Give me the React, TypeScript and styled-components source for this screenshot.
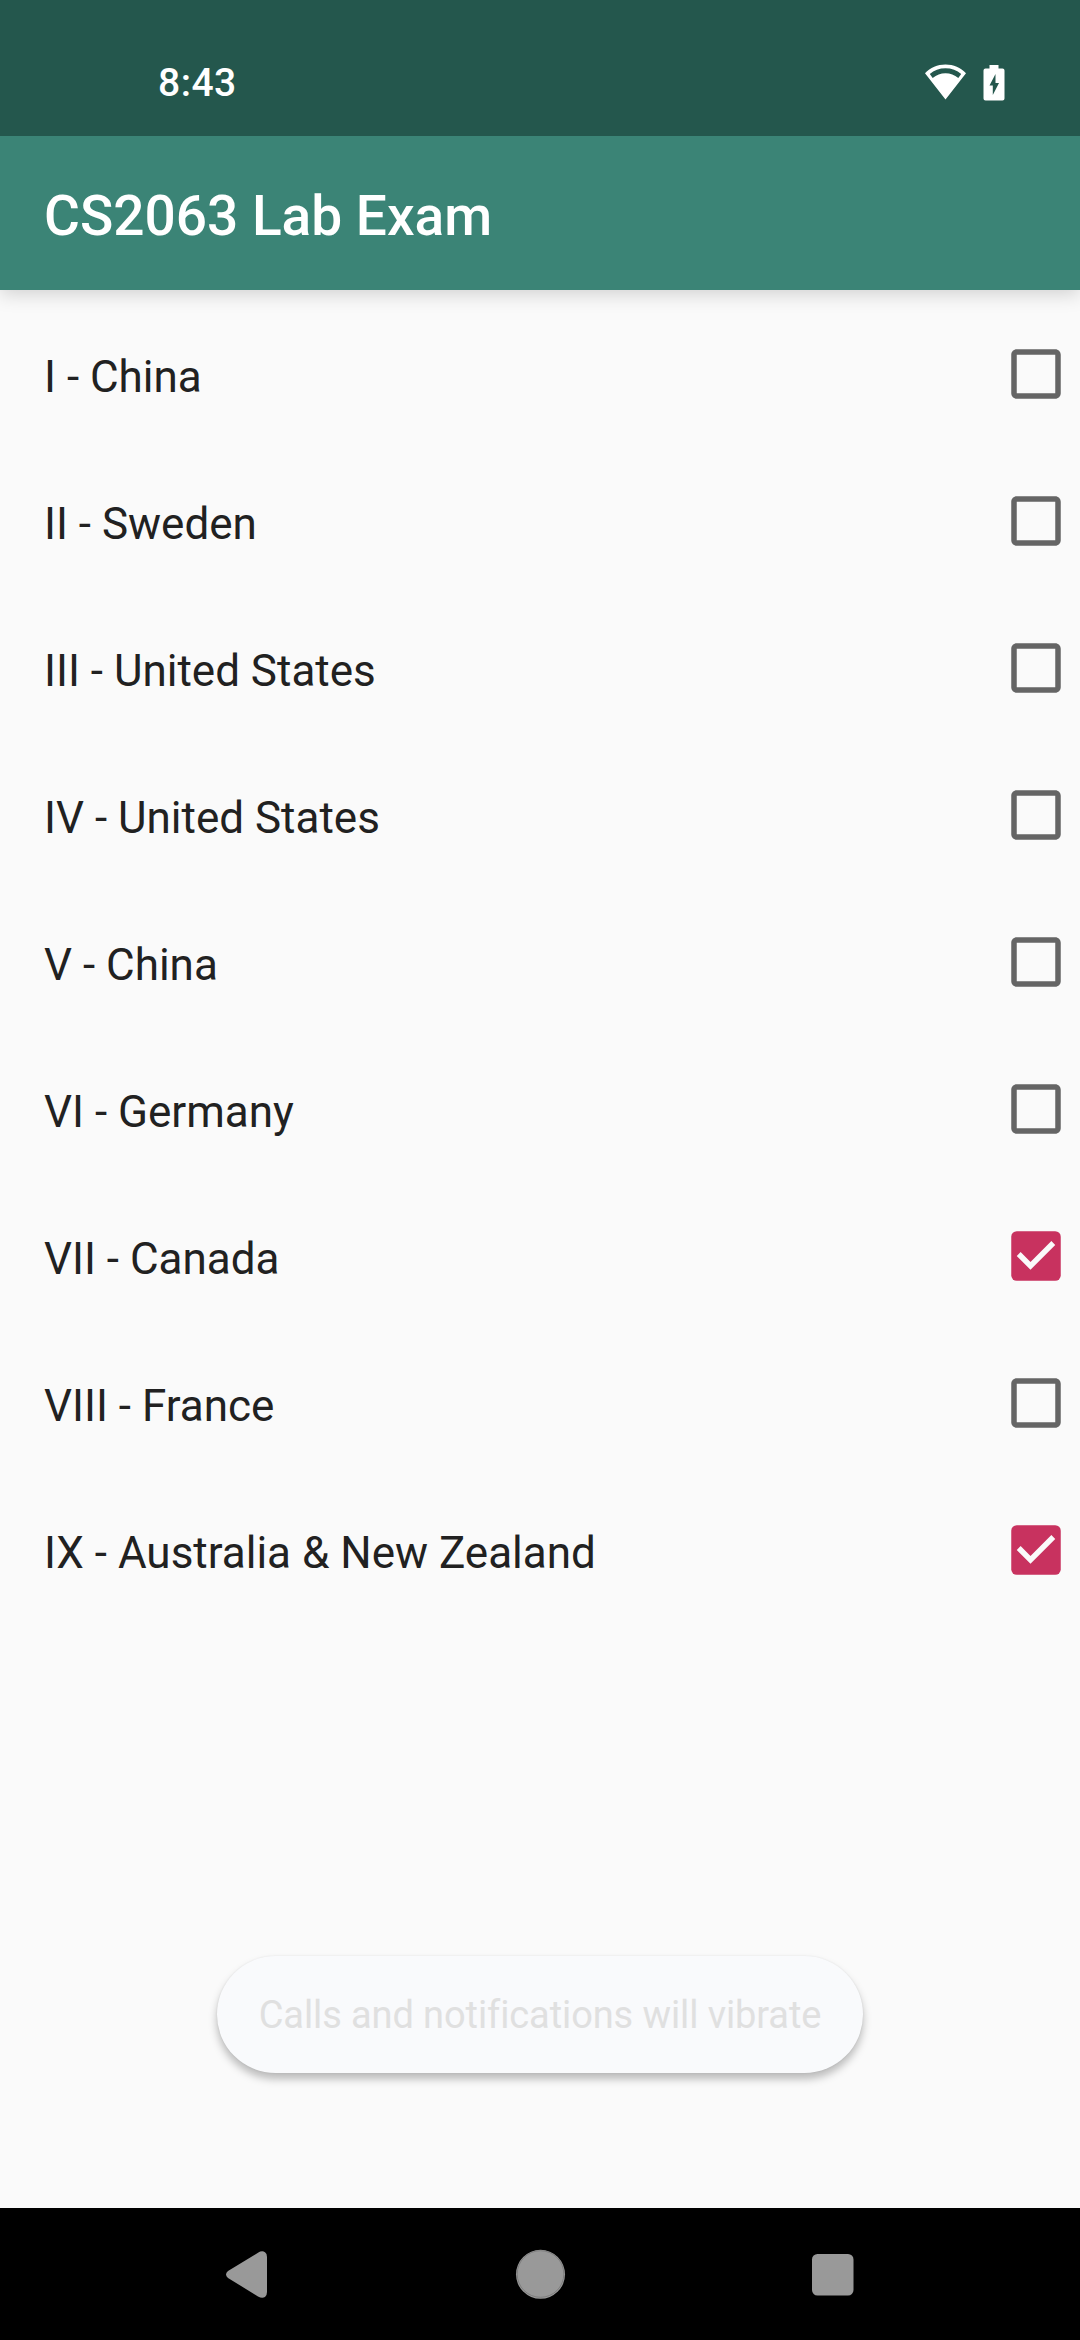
import React from "react";
import styled, { createGlobalStyle } from "styled-components";

const GlobalStyle = createGlobalStyle`
  body { margin: 0; background: #fafafa; }
  *, *::before, *::after { box-sizing: border-box; }
`;

const Screen = styled.div`
  position: relative;
  display: flex;
  flex-direction: column;
  width: 1080px;
  height: 2340px;
  overflow: hidden;
  background: #fafafa;
  font-family: Roboto, "Liberation Sans", sans-serif;
`;

const StatusBar = styled.header`
  z-index: 1;
  display: flex;
  align-items: center;
  justify-content: space-between;
  flex: 0 0 136px;
  padding: 29px 74px 0 158px;
  background: #24574d;
  color: #fff;
`;

const Clock = styled.span`
  font-size: 39px;
  font-weight: 500;
  line-height: 46px;
  letter-spacing: 0.5px;
`;

const StatusIcons = styled.div`
  display: flex;
  align-items: center;
  gap: 15px;
`;

const AppBar = styled.div`
  display: flex;
  align-items: center;
  flex: 0 0 154px;
  padding: 6px 44px 0;
  background: #3b8476;
  box-shadow: 0 4px 18px rgba(0, 0, 0, 0.17);
`;

const Title = styled.h1`
  margin: 0;
  color: #fff;
  font-size: 55px;
  font-weight: 500;
  line-height: 64px;
`;

const List = styled.ul`
  flex: 1;
  margin: 0;
  padding: 11px 0 0;
  list-style: none;
`;

const Row = styled.li`
  display: flex;
  align-items: center;
  justify-content: space-between;
  height: 147px;
  padding: 0 11px 0 44px;
`;

const Label = styled.span`
  padding-top: 5px;
  color: #212121;
  font-size: 44px;
  line-height: 52px;
`;

const CheckIcon = styled.svg`
  width: 66px;
  height: 66px;
  margin-bottom: 1px;
`;

const Toast = styled.div`
  position: absolute;
  top: 1956px;
  left: 217px;
  display: flex;
  align-items: center;
  justify-content: center;
  width: 646px;
  height: 117px;
  border-radius: 59px;
  background: #f9fafc;
  box-shadow: 0 6px 9px rgba(0, 0, 0, 0.26), 0 0 2px rgba(0, 0, 0, 0.08);
  color: #e0e0e0;
  font-size: 38px;
  letter-spacing: -0.1px;
  white-space: nowrap;
`;

const NavBar = styled.nav`
  display: flex;
  align-items: center;
  justify-content: space-between;
  flex: 0 0 132px;
  padding: 0 202px;
  background: #000;
`;

const NavIcon = styled.svg`
  width: 90px;
  height: 90px;
  fill: #999;
`;

const races = [
  { label: "I - China", checked: false },
  { label: "II - Sweden", checked: false },
  { label: "III - United States", checked: false },
  { label: "IV - United States", checked: false },
  { label: "V - China", checked: false },
  { label: "VI - Germany", checked: false },
  { label: "VII - Canada", checked: true },
  { label: "VIII - France", checked: false },
  { label: "IX - Australia & New Zealand", checked: true },
];

function Checkbox({ checked }: { checked: boolean }) {
  return (
    <CheckIcon viewBox="0 0 24 24" role="checkbox" aria-checked={checked}>
      {checked ? (
        <>
          <rect x="3" y="3" width="18" height="18" rx="2" fill="#c8325f" />
          <path d="M10 17l-5-5 1.41-1.41L10 14.17l7.59-7.59L19 8z" fill="#fafafa" />
        </>
      ) : (
        <path
          d="M19 5v14H5V5h14m0-2H5c-1.1 0-2 .9-2 2v14c0 1.1.9 2 2 2h14c1.1 0 2-.9 2-2V5c0-1.1-.9-2-2-2z"
          fill="#656565"
        />
      )}
    </CheckIcon>
  );
}

export default function App() {
  return (
    <Screen>
      <GlobalStyle />
      <StatusBar>
        <Clock>8:43</Clock>
        <StatusIcons>
          <svg width="44" height="38" viewBox="0 0 44 38" fill="none">
            <path
              fill="#fff"
              fillRule="evenodd"
              d="M22.500 .5C14.500 .5 7.300 3.500 2 9.300L22.500 35.500L43 9.300C37.700 3.500 30.500 .5 22.500 .5ZM22.500 4.300C28.500 4.300 34 6.300 38.200 10L35.300 14C31.500 11 27.300 9.300 22.500 9.300C17.700 9.300 13.500 11 9.700 14L6.800 10C11 6.300 16.500 4.300 22.500 4.300Z"
            />
          </svg>
          <svg width="24" height="38" viewBox="0 0 24 38">
            <path
              fill="#fff"
              fillRule="evenodd"
              d="M7.500 1H16.500V4.500H20.500Q22.500 4.500 22.500 6.500V34.500Q22.500 36.500 20.500 36.500H3.500Q1.500 36.500 1.500 34.500V6.500Q1.500 4.500 3.500 4.500H7.500ZM13.500 10L7.500 21.500H10.800V31L17 19H13.500Z"
            />
          </svg>
        </StatusIcons>
      </StatusBar>
      <AppBar>
        <Title>CS2063 Lab Exam</Title>
      </AppBar>
      <List>
        {races.map((race) => (
          <Row key={race.label}>
            <Label>{race.label}</Label>
            <Checkbox checked={race.checked} />
          </Row>
        ))}
      </List>
      <Toast>Calls and notifications will vibrate</Toast>
      <NavBar>
        <NavIcon viewBox="202 2229 90 90">
          <path d="M228 2271L258 2252.800Q262 2250.200 265 2252.200Q267 2253.500 267 2257V2292Q267 2295.500 265 2297Q262 2298.800 258 2296.400L228 2278Q224 2274.500 228 2271Z" />
        </NavIcon>
        <NavIcon viewBox="495 2229 90 90">
          <circle cx="540.500" cy="2274.300" r="24.500" />
          <circle cx="540.500" cy="2274" r="23.300" fill="none" stroke="#777" strokeWidth="0.800" />
        </NavIcon>
        <NavIcon viewBox="788 2229 90 90">
          <rect x="812" y="2254" width="41.500" height="41.500" rx="5.500" />
        </NavIcon>
      </NavBar>
    </Screen>
  );
}
